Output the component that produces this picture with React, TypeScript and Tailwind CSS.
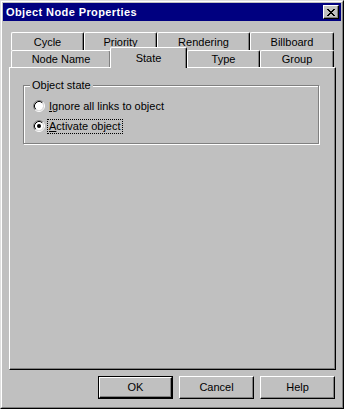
import React from "react";

function Tab({ label, w, h = 18 }: { label: string; w: number; h?: number }) {
  return (
    <div
      className="flex items-center justify-center border-t border-l border-r border-t-white border-l-white border-r-black rounded-tl-[2px] rounded-tr-[2px] shadow-[inset_-1px_0_0_#808080] bg-[#c0c0c0] text-[11px] text-black shrink-0"
      style={{ width: w, height: h }}
    >
      <span className="pt-[1px]">{label}</span>
    </div>
  );
}

function Radio({ checked }: { checked?: boolean }) {
  return (
    <svg width="12" height="12" viewBox="0 0 12 12" className="shrink-0">
      <path d="M2.11 9.89 A5.5 5.5 0 0 1 9.89 2.11" fill="none" stroke="#808080" strokeWidth="1" />
      <path d="M9.89 2.11 A5.5 5.5 0 0 1 2.11 9.89" fill="none" stroke="#ffffff" strokeWidth="1" />
      <circle cx="6" cy="6" r="4.2" fill="#ffffff" />
      <path d="M2.82 9.18 A4.5 4.5 0 0 1 9.18 2.82" fill="none" stroke="#000000" strokeWidth="1" />
      <path d="M9.18 2.82 A4.5 4.5 0 0 1 2.82 9.18" fill="none" stroke="#dfdfdf" strokeWidth="1" />
      {checked && <circle cx="6" cy="6" r="2" fill="#000000" />}
    </svg>
  );
}

function Button({ children, isDefault }: { children: React.ReactNode; isDefault?: boolean }) {
  if (isDefault) {
    return (
      <div className="w-[75px] h-[23px] border border-black shrink-0">
        <div className="w-full h-full flex items-center justify-center border border-t-white border-l-white border-r-black border-b-black shadow-[inset_-1px_-1px_0_#808080] bg-[#c0c0c0] text-[11px] text-black">
          {children}
        </div>
      </div>
    );
  }
  return (
    <div className="w-[75px] h-[23px] flex items-center justify-center border border-t-white border-l-white border-r-black border-b-black shadow-[inset_-1px_-1px_0_#808080] bg-[#c0c0c0] text-[11px] text-black shrink-0">
      {children}
    </div>
  );
}

export default function App() {
  return (
    <div className="w-[344px] h-[409px] bg-[#c0c0c0] border border-t-[#dfdfdf] border-l-[#dfdfdf] border-r-black border-b-black font-['Liberation_Sans',Arial,sans-serif] select-none">
      <div className="w-full h-full border border-t-white border-l-white border-r-[#808080] border-b-[#808080] p-px flex flex-col">
        {/* Title bar */}
        <div className="h-[18px] bg-[#000080] flex items-center justify-between pl-[3px] pr-[2px] shrink-0">
          <span className="text-white font-bold text-[11px] leading-none tracking-[0.4px]">Object Node Properties</span>
          <div className="w-[16px] h-[14px] bg-[#c0c0c0] border border-t-white border-l-white border-r-black border-b-black shadow-[inset_-1px_-1px_0_#808080] flex items-center justify-center">
            <svg width="8" height="7" viewBox="0 0 8 7" shapeRendering="crispEdges">
              <path d="M0 0h2v1h-2zM6 0h2v1h-2zM1 1h2v1h-2zM5 1h2v1h-2zM2 2h4v1h-4zM3 3h2v1h-2zM2 4h4v1h-4zM1 5h2v1h-2zM5 5h2v1h-2zM0 6h2v1h-2zM6 6h2v1h-2z" fill="#000" />
            </svg>
          </div>
        </div>

        {/* Tabs */}
        <div className="mt-[11px] flex pl-[8px]">
          <Tab label="Cycle" w={73} />
          <Tab label="Priority" w={73} />
          <Tab label="Rendering" w={93} />
          <Tab label="Billboard" w={84} />
        </div>
        <div className="flex pl-[8px] h-[17px] items-end relative z-10">
          <Tab label="Node Name" w={100} h={17} />
          <div className="-ml-[1px] mb-[-1px] relative z-10">
            <Tab label="State" w={77} h={21} />
          </div>
          <Tab label="Type" w={73} h={17} />
          <Tab label="Group" w={74} h={17} />
        </div>

        {/* Panel */}
        <div className="ml-[6px] w-[327px] h-[303px] border border-t-white border-l-white border-r-black border-b-black shadow-[inset_-1px_-1px_0_#808080] shrink-0">
          <div className="relative ml-[13px] mt-[17px] w-[296px] h-[59px] border border-[#808080] shadow-[1px_1px_0_#ffffff,inset_1px_1px_0_#ffffff]">
            <span className="absolute left-[6px] -top-[8px] bg-[#c0c0c0] px-[2px] text-[11px] leading-[14px] text-black">
              Object state
            </span>
            <div className="flex flex-col pt-[12px] pl-[9px] gap-[4px]">
              <div className="flex items-center h-[16px]">
                <Radio />
                <span className="ml-[2px] px-[1px] border border-transparent text-[11px] leading-[13px] text-black">
                  <u>I</u>gnore all links to object
                </span>
              </div>
              <div className="flex items-center h-[16px]">
                <Radio checked />
                <span className="ml-[2px] px-[1px] border border-dotted border-black text-[11px] leading-[13px] text-black">
                  <u>A</u>ctivate object
                </span>
              </div>
            </div>
          </div>
        </div>

        {/* Buttons */}
        <div className="mt-[6px] flex justify-end gap-[6px] pr-[6px]">
          <Button isDefault>OK</Button>
          <Button>Cancel</Button>
          <Button>Help</Button>
        </div>
      </div>
    </div>
  );
}
